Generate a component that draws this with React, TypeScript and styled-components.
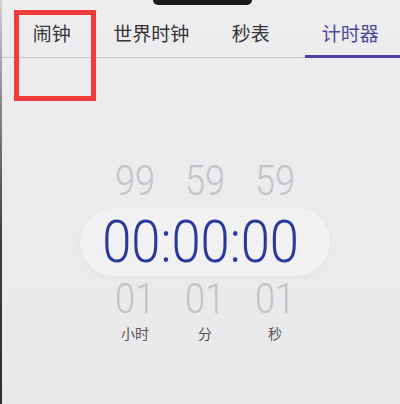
import styled, { createGlobalStyle } from "styled-components";

const GlobalStyle = createGlobalStyle`
  html, body {
    margin: 0;
    padding: 0;
    background: #ecebee;
  }
  #root {
    width: 400px;
    height: 404px;
  }
`;

const tabs = ["闹钟", "世界时钟", "秒表", "计时器"];
const columns = [
  { top: "99", bottom: "01", label: "小时" },
  { top: "59", bottom: "01", label: "分" },
  { top: "59", bottom: "01", label: "秒" },
];

function App() {
  return (
    <>
      <GlobalStyle />
      <Screen>
        <Notch />
        <TabBar>
          {tabs.map((t, i) => (
            <Tab key={t} active={i === 3}>
              {t}
            </Tab>
          ))}
        </TabBar>
        <Wheel>
          <DigitRow>
            {columns.map((c, i) => (
              <FadedDigits key={i}>{c.top}</FadedDigits>
            ))}
          </DigitRow>
          <Pill>
            <MainTime>00:00:00</MainTime>
          </Pill>
          <DigitRow>
            {columns.map((c, i) => (
              <FadedDigits key={i}>{c.bottom}</FadedDigits>
            ))}
          </DigitRow>
          <LabelRow>
            {columns.map((c) => (
              <UnitLabel key={c.label}>{c.label}</UnitLabel>
            ))}
          </LabelRow>
        </Wheel>
        <Highlight />
      </Screen>
    </>
  );
}

const Screen = styled.div`
  position: relative;
  width: 400px;
  height: 404px;
  box-sizing: border-box;
  overflow: hidden;
  background: linear-gradient(#edecef, #e9e9ea);
  border-left: 2px solid;
  border-image: linear-gradient(#d2d2d4, #8a8a8c 25%, #3c3c3e 60%, #2e2e30) 1;
  font-family: "Noto Sans CJK SC", "Noto Sans", sans-serif;
`;

const Notch = styled.div`
  position: absolute;
  top: 0;
  left: 151px;
  width: 99px;
  height: 5px;
  background: #1c1c1c;
  border-radius: 0 0 8px 8px;
`;

const TabBar = styled.div`
  display: grid;
  grid-template-columns: repeat(4, 1fr);
  height: 58px;
  box-sizing: border-box;
  border-bottom: 1px solid #c9c8cc;
`;

const Tab = styled.div<{ active: boolean }>`
  position: relative;
  display: flex;
  align-items: center;
  justify-content: center;
  padding-top: 8px;
  font-size: 19px;
  color: ${(props) => (props.active ? "#4b4a9c" : "#353535")};
  &::after {
    content: "";
    display: ${(props) => (props.active ? "block" : "none")};
    position: absolute;
    left: 4px;
    right: 0;
    bottom: -1px;
    height: 3px;
    background: #4a43a3;
  }
`;

const Wheel = styled.div`
  width: 250px;
  margin: 100px 0 0 78px;
  padding-right: 5px;
  display: flex;
  flex-direction: column;
  align-items: center;
  font-family: Roboto, "Liberation Sans", sans-serif;
`;

const DigitRow = styled.div`
  display: grid;
  grid-template-columns: repeat(3, 70px);
  justify-content: center;
`;

const FadedDigits = styled.div`
  text-align: center;
  font-size: 42px;
  line-height: 46px;
  font-weight: 300;
  color: #c3c3c7;
  transform: scaleX(0.86);
`;

const Pill = styled.div`
  width: 250px;
  height: 68px;
  margin: 4px 0 0;
  border-radius: 34px;
  background: #f1f0f2;
  box-shadow: 0 1px 5px rgba(0, 0, 0, 0.04);
  display: flex;
  align-items: center;
  justify-content: center;
  padding-right: 8px;
  box-sizing: border-box;
`;

const MainTime = styled.div`
  font-size: 59px;
  line-height: 68px;
  font-weight: 300;
  color: #2a389c;
  transform: scaleX(0.89);
  white-space: nowrap;
`;

const LabelRow = styled.div`
  display: grid;
  grid-template-columns: repeat(3, 70px);
  justify-content: center;
  margin-top: 3px;
`;

const UnitLabel = styled.div`
  text-align: center;
  font-family: "Noto Sans CJK SC", sans-serif;
  font-size: 14px;
  line-height: 16px;
  color: #555558;
`;

const Highlight = styled.div`
  position: absolute;
  left: 12px;
  top: 10px;
  width: 82px;
  height: 91px;
  box-sizing: border-box;
  border: 5px solid #f23c3c;
`;

export default App;
